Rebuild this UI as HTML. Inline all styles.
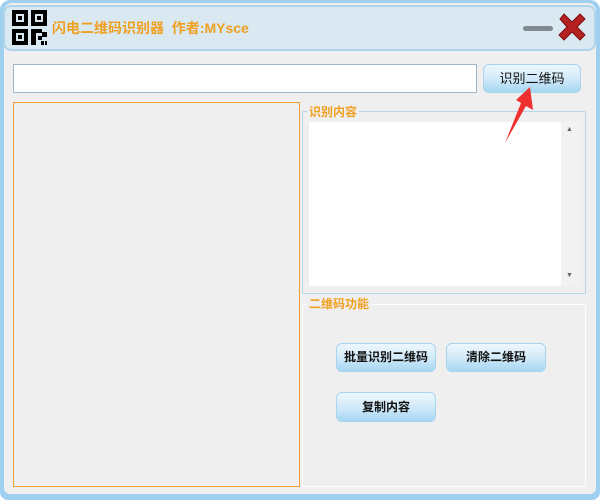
<!DOCTYPE html>
<html><head><meta charset="utf-8"><style>
*{margin:0;padding:0;box-sizing:border-box}
body{width:600px;height:500px;overflow:hidden;background:#fff;font-family:"Liberation Sans","Noto Sans CJK SC",sans-serif}
.win{position:absolute;left:0;top:0;width:600px;height:500px;background:#9fd0ef;border-radius:10px 10px 8px 8px}
.inner{position:absolute;left:4px;top:3px;width:592px;height:491px;background:#efefef;border-radius:8px 8px 6px 6px}
.title{position:absolute;left:3px;top:5px;width:593px;height:46px;background:#d9e8f1;border:2px solid #b0d4ec;border-radius:8px}
.ttext{position:absolute;left:52px;top:18px;font-size:14px;font-weight:bold;color:#f0a020;letter-spacing:0}
.abs{position:absolute}
.btn{position:absolute;border:1px solid #a8d4ef;border-radius:6px;background:linear-gradient(#eef7fd,#d2eaf9 50%,#a6d7f3);font-size:12px;text-align:center;color:#111}
.grp{position:absolute;border:1px solid #b8d6ea;border-radius:2px}
.lg{position:absolute;background:#efefef;color:#f0a020;font-size:12px;font-weight:bold;padding:0 2px;line-height:14px}
</style></head><body>
<div class="win"></div>
<div class="inner"></div>
<div class="title"></div>
<svg class="abs" style="left:12px;top:10px" width="36" height="36" viewBox="0 0 36 36">
<g fill="#000">
<path d="M0 0h16v16H0z M4 4v8h8V4z" fill-rule="evenodd"/>
<rect x="6" y="6" width="4" height="4"/>
<path d="M19 0h16v16H19z M23 4v8h8V4z" fill-rule="evenodd"/>
<rect x="25" y="6" width="4" height="4"/>
<path d="M0 19h16v16H0z M4 23v8h8V23z" fill-rule="evenodd"/>
<rect x="6" y="25" width="4" height="4"/>
<rect x="19" y="19" width="5" height="16"/><rect x="24" y="19" width="6" height="4"/><rect x="30" y="22" width="5" height="5"/><rect x="26" y="26" width="4" height="4"/><rect x="29" y="31" width="3" height="4"/><rect x="33" y="31" width="2" height="4"/>
</g></svg>
<div class="ttext">闪电二维码识别器&nbsp;&nbsp;作者:MYsce</div>
<div class="abs" style="left:523px;top:26px;width:30px;height:5px;background:#7f8a92;border-radius:3px"></div>
<svg class="abs" style="left:556px;top:11px" width="32" height="32" viewBox="0 0 32 32">
<path d="M4 8L8 3L16 11L24 3L29 8L21 16L29 24L24 29L16 21L8 29L3 24L11 16Z" fill="#b52020" stroke="#7a1010" stroke-width="1"/></svg>
<div class="abs" style="left:13px;top:64px;width:464px;height:29px;background:#fff;border:1px solid #9fb8cc"></div>
<div class="btn" style="left:483px;top:64px;width:98px;height:29px;line-height:27px;font-size:13px">识别二维码</div>
<div class="abs" style="left:13px;top:102px;width:287px;height:385px;border:1px solid #f0a030"></div>
<div class="grp" style="left:302px;top:111px;width:284px;height:183px"></div>
<div class="lg" style="left:307px;top:105px">识别内容</div>
<div class="abs" style="left:309px;top:122px;width:252px;height:164px;background:#fff"></div>
<div class="abs" style="left:561px;top:122px;width:19px;height:164px;background:#f2f2f2"></div>
<div class="abs" style="left:566px;top:126px;font-size:7px;color:#666">▲</div>
<div class="abs" style="left:566px;top:272px;font-size:7px;color:#666">▼</div>
<div class="grp" style="left:302px;top:304px;width:284px;height:183px;border-color:#fff"></div>
<div class="lg" style="left:307px;top:297px">二维码功能</div>
<div class="btn" style="left:336px;top:343px;width:100px;height:29px;line-height:27px;font-weight:bold">批量识别二维码</div>
<div class="btn" style="left:446px;top:343px;width:100px;height:29px;line-height:27px;font-weight:bold">清除二维码</div>
<div class="btn" style="left:336px;top:392px;width:100px;height:30px;line-height:28px;font-weight:bold">复制内容</div>
<svg class="abs" style="left:0;top:0" width="600" height="500">
<path d="M530 87L533 110L526 106L505 143L521 103L516 100Z" fill="#f03030"/></svg>
</body></html>
